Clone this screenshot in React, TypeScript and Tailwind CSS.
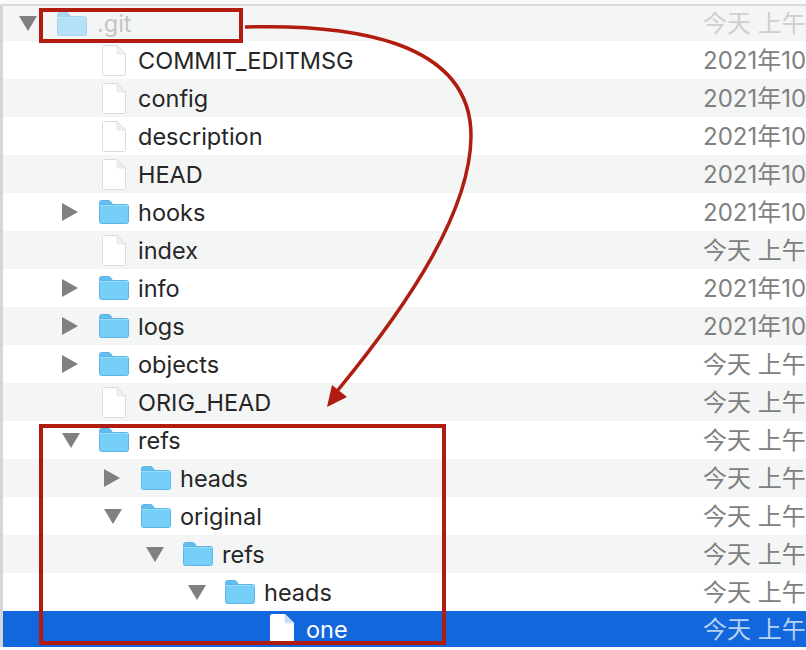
type Entry = {
  name: string;
  depth: number;
  kind: 'file' | 'folder';
  open?: boolean;
  date: string;
};

const TODAY = '今天 上午';
const OLD = '2021年10月';

const entries: Entry[] = [
  { name: 'COMMIT_EDITMSG', depth: 1, kind: 'file', date: OLD },
  { name: 'config', depth: 1, kind: 'file', date: OLD },
  { name: 'description', depth: 1, kind: 'file', date: OLD },
  { name: 'HEAD', depth: 1, kind: 'file', date: OLD },
  { name: 'hooks', depth: 1, kind: 'folder', date: OLD },
  { name: 'index', depth: 1, kind: 'file', date: TODAY },
  { name: 'info', depth: 1, kind: 'folder', date: OLD },
  { name: 'logs', depth: 1, kind: 'folder', date: OLD },
  { name: 'objects', depth: 1, kind: 'folder', date: TODAY },
  { name: 'ORIG_HEAD', depth: 1, kind: 'file', date: TODAY },
  { name: 'refs', depth: 1, kind: 'folder', open: true, date: TODAY },
  { name: 'heads', depth: 2, kind: 'folder', date: TODAY },
  { name: 'original', depth: 2, kind: 'folder', open: true, date: TODAY },
  { name: 'refs', depth: 3, kind: 'folder', open: true, date: TODAY },
  { name: 'heads', depth: 4, kind: 'folder', open: true, date: TODAY },
];

function Folder() {
  return (
    <svg width="30" height="24" viewBox="0 0 30 24" className="block shrink-0">
      <path d="M.5 3C.5 1.500 1.300.500 2.500.500h7c1 0 1.600.4 2.200 1.200L13.500 4.500H.5z" fill="#62bdf0" stroke="#5fb4e6" strokeWidth="1" />
      <rect x="0.5" y="4.500" width="29" height="19" rx="2" fill="#75cff9" stroke="#5fb4e6" strokeWidth="1" />
      <rect x="1" y="5" width="28" height="1" fill="#92dcfc" />
    </svg>
  );
}

function FileIcon({ selected = false }: { selected?: boolean }) {
  return (
    <svg width="24" height="31" viewBox="0 0 24 31" className="block shrink-0">
      <path
        d="M.5 2C.5 1 1 .500 2 .500H15L23.500 9V29C23.500 30 23 30.500 22 30.500H2C1 30.500.5 30 .5 29Z"
        fill="#fff"
        stroke={selected ? '#fff' : '#dcdcdc'}
        strokeWidth="1"
      />
      <path d="M15 .500V7.500C15 8.500 15.500 9 16.500 9H23.500Z" fill={selected ? '#c9dcf7' : '#f0f0f0'} stroke={selected ? '#c9dcf7' : '#dcdcdc'} strokeWidth="0.7" />
    </svg>
  );
}

function Arrow({ open }: { open?: boolean }) {
  return open ? (
    <svg width="18" height="15" viewBox="0 0 18 15" className="block">
      <path d="M0 0H18L9 15Z" fill="#808080" />
    </svg>
  ) : (
    <svg width="16" height="18" viewBox="0 0 16 18" className="block">
      <path d="M0 0L16 9L0 18Z" fill="#808080" />
    </svg>
  );
}

function Row({ entry, index }: { entry: Entry; index: number }) {
  const stripe = index % 2 === 1 ? 'bg-[#f4f5f5]' : 'bg-white';
  return (
    <div className={`flex h-[38px] items-center ${stripe}`}>
      <div className="flex min-w-0 flex-1 items-center" style={{ paddingLeft: 17 + 42 * entry.depth }}>
        <div className="flex w-[37px] shrink-0 items-center">
          {entry.kind === 'folder' && <Arrow open={entry.open} />}
        </div>
        <div className="flex w-[39px] shrink-0 items-center">
          {entry.kind === 'folder' ? <Folder /> : <div className="ml-[3px]"><FileIcon /></div>}
        </div>
        <span className="pt-[2px] text-[#262626]">{entry.name}</span>
      </div>
      <div className="w-[103px] shrink-0 overflow-hidden whitespace-nowrap pt-[1px] text-[24px] text-[#808080]">{entry.date}</div>
    </div>
  );
}

export default function App() {
  return (
    <div className="relative h-[650px] w-[806px] overflow-hidden bg-white font-['Inter','Noto_Sans_CJK_SC',sans-serif] text-[23.5px]">
      <div className="h-[6px] border-b-2 border-[#dcdcdc] bg-[#fafafa]" />
      <div className="border-l-[3px] border-[#d6d6d6]">
        {/* .git, greyed out */}
        <div className="flex h-[35px] items-center bg-[#f4f5f5]">
          <div className="flex min-w-0 flex-1 items-center pl-[16px]">
            <div className="flex w-[38px] shrink-0 items-center"><Arrow open /></div>
            <div className="flex w-[40px] shrink-0 items-center opacity-50"><Folder /></div>
            <span className="pt-[1px] text-[#c4c4c4]">.git</span>
          </div>
          <div className="w-[103px] shrink-0 overflow-hidden whitespace-nowrap text-[24px] text-[#cfcfcf]">{TODAY}</div>
        </div>

        {entries.map((entry, i) => (
          <Row key={i} entry={entry} index={i} />
        ))}

        {/* selected file */}
        <div className="flex h-[36px] items-center bg-[#1367dc]">
          <div className="flex min-w-0 flex-1 items-center pl-[267px]">
            <div className="w-[36px] shrink-0"><FileIcon selected /></div>
            <span className="pt-[2px] text-white">one</span>
          </div>
          <div className="w-[103px] shrink-0 overflow-hidden whitespace-nowrap pt-[1px] text-[24px] text-[#b8d2f5]">{TODAY}</div>
        </div>
      </div>

      {/* red annotations */}
      <div className="absolute left-[39px] top-[8px] h-[35px] w-[204px] border-4 border-[#b01c10]" />
      <div className="absolute left-[39px] top-[424px] h-[221px] w-[407px] border-4 border-[#b01c10]" />
      <svg width="806" height="650" viewBox="0 0 806 650" className="absolute left-0 top-0">
        <path d="M245 27C345 24 472 38 471 137C470 210 412 300 338 390" fill="none" stroke="#b01c10" strokeWidth="3.500" />
        <path d="M327 407L332 385L347 397Z" fill="#b01c10" />
      </svg>
    </div>
  );
}
